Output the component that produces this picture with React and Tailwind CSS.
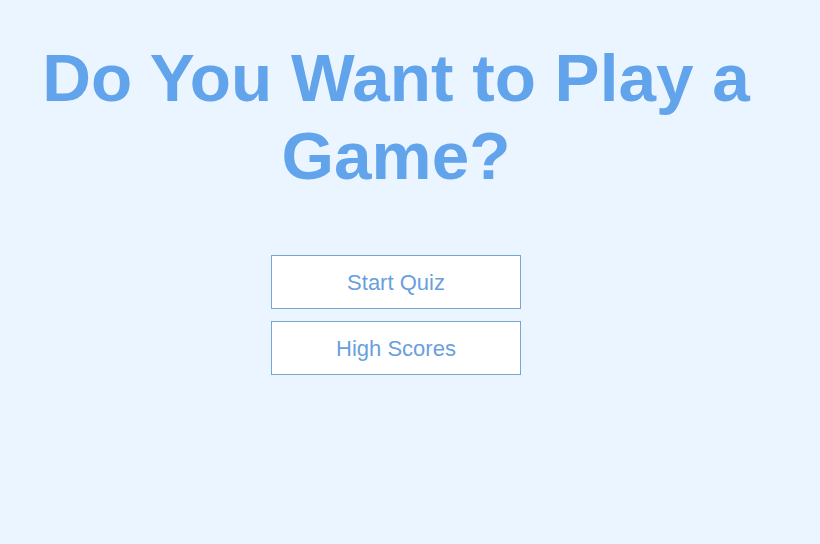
import React from 'react';

const App = () => {
  return (
    <div className="min-h-[544px] w-full bg-[#ebf5ff] font-['Liberation_Sans',Arial,sans-serif]">
      <div className="w-[792px] flex flex-col items-center pt-[39px]">
        <h1 className="text-center text-[67.5px] leading-[78px] font-bold text-[#62a4ec]">
          Do You Want to Play a Game?
        </h1>
        <div className="mt-[60px] flex flex-col gap-[12px]">
          <button className="w-[250px] h-[54px] bg-white border border-[#76a6d6] text-[22px] text-[#6a9fdd]">
            Start Quiz
          </button>
          <button className="w-[250px] h-[54px] bg-white border border-[#76a6d6] text-[22px] text-[#6a9fdd]">
            High Scores
          </button>
        </div>
      </div>
    </div>
  );
};

export default App;
